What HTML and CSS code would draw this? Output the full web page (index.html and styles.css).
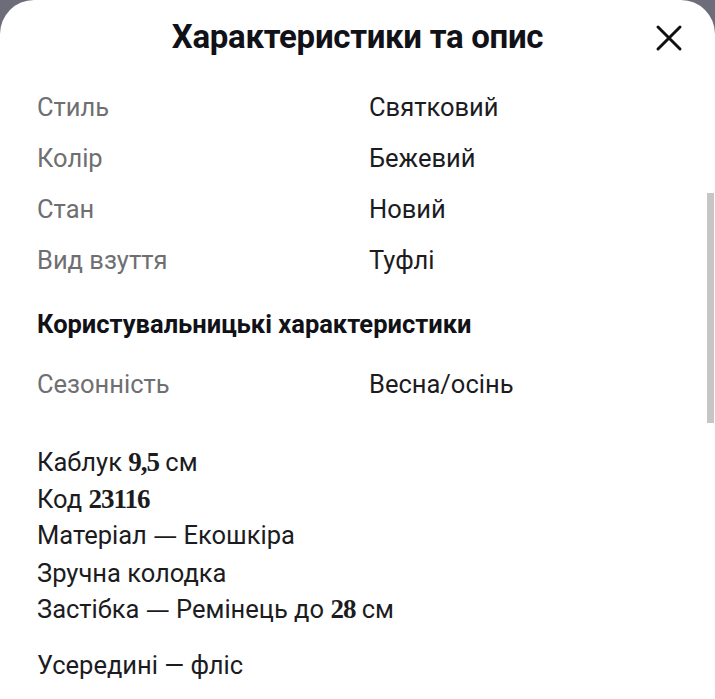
FILE: index.html
```html
<!DOCTYPE html>
<html lang="uk">
<head>
  <meta charset="UTF-8">
  <meta name="viewport" content="width=device-width, initial-scale=1.0">
  <title>Характеристики та опис</title>
  <link rel="stylesheet" href="styles.css">
</head>
<body>
  <div class="sheet">
    <div class="sheet-header">
      <h1 class="sheet-title">Характеристики та опис</h1>
      <button class="close-btn" aria-label="Закрити">
        <svg width="28" height="28" viewBox="0 0 28 28">
          <path d="M3 3 L25 25 M25 3 L3 25" stroke="#111" stroke-width="3" stroke-linecap="round" fill="none"/>
        </svg>
      </button>
    </div>

    <div class="specs">
      <div class="spec-label">Стиль</div>
      <div class="spec-value">Святковий</div>
      <div class="spec-label">Колір</div>
      <div class="spec-value">Бежевий</div>
      <div class="spec-label">Стан</div>
      <div class="spec-value">Новий</div>
      <div class="spec-label">Вид взуття</div>
      <div class="spec-value">Туфлі</div>
    </div>

    <h2 class="section-title">Користувальницькі характеристики</h2>

    <div class="specs">
      <div class="spec-label">Сезонність</div>
      <div class="spec-value">Весна/осінь</div>
    </div>

    <div class="description">
      <p>Каблук <span class="num">9,5</span> см<br>
      Код <span class="num">23116</span><br>
      Матеріал <span class="dash">—</span> Екошкіра<br>
      Зручна колодка<br>
      Застібка <span class="dash">—</span> Ремінець до <span class="num">28</span> см</p>
      <p class="gap">Усередині — фліс</p>
    </div>

    <div class="scrollbar"></div>
  </div>
</body>
</html>
```

FILE: styles.css
```css
body, html {
  margin: 0;
  padding: 0;
  height: 100%;
  background-color: #6d6d79;
  font-family: Roboto, "Noto Sans", Arial, sans-serif;
  overflow: hidden;
}

.sheet {
  position: relative;
  height: 100%;
  background-color: #fff;
  border-radius: 34px 34px 0 0;
  padding-left: 37px;
  box-sizing: border-box;
}

.sheet-header {
  height: 76px;
  display: flex;
  align-items: center;
  justify-content: center;
  position: relative;
}

.sheet-title {
  margin: 0 0 4px -37px;
  font-size: 33px;
  font-weight: 700;
  color: #111118;
  letter-spacing: -0.3px;
}

.close-btn {
  position: absolute;
  right: 32px;
  top: 24px;
  border: none;
  background: none;
  padding: 0;
  width: 28px;
  height: 28px;
  cursor: pointer;
}

.specs {
  display: grid;
  grid-template-columns: 332px 1fr;
  grid-auto-rows: 51px;
  align-items: center;
  font-size: 25.5px;
}

.sheet-header + .specs {
  margin-top: 5px;
}

.spec-label {
  color: #6f6f72;
}

.spec-value {
  color: #1c1c1f;
}

.section-title {
  margin: 24px 0 19px;
  font-size: 25.5px;
  line-height: 30px;
  font-weight: 700;
  color: #111118;
}

.description {
  margin-top: 35px;
  font-size: 25.5px;
  line-height: 36.5px;
  color: #1c1c1f;
}

.description p {
  margin: 0;
}

.description .gap {
  margin-top: 18px;
}

.dash {
  font-family: "DejaVu Sans", sans-serif;
  font-size: 24px;
}

.num {
  font-family: "Liberation Serif", "DejaVu Serif", serif;
  font-weight: 700;
  font-size: 27px;
  letter-spacing: -1px;
}

.scrollbar {
  position: absolute;
  right: 1px;
  top: 193px;
  width: 7px;
  height: 230px;
  background-color: #c6c6c6;
}
```
